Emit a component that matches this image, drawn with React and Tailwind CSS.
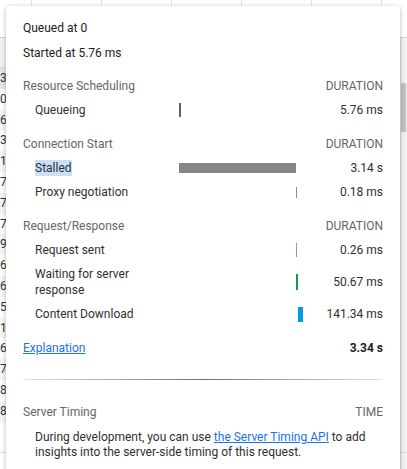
import React from "react";

const total = 3340;
const scale = 124 / total;

const sections = [
	{
		title: "Resource Scheduling",
		rows: [{ label: "Queueing", start: 0, end: 5.76, color: "#5f5f5f", h: 14, minW: 2, value: "5.76 ms" }],
	},
	{
		title: "Connection Start",
		rows: [
			{ label: "Stalled", start: 5.76, end: 3145, color: "#888888", h: 10, minW: 1, value: "3.14 s", selected: true },
			{ label: "Proxy negotiation", start: 3145, end: 3145.2, color: "#a1887f", h: 11, minW: 1, value: "0.18 ms" },
		],
	},
	{
		title: "Request/Response",
		rows: [
			{ label: "Request sent", start: 3145.2, end: 3145.5, color: "#7fa3a3", h: 14, minW: 1, value: "0.26 ms" },
			{ label: "Waiting for server response", start: 3145.5, end: 3196, color: "#0f9d48", h: 16, minW: 2, value: "50.67 ms", tall: true },
			{ label: "Content Download", start: 3196, end: 3340, color: "#039be5", h: 15, minW: 5, value: "141.34 ms" },
		],
	},
];

const digits = ["3", "0", "6", "3", "1", "7", "7", "7", "9", "6", "6", "5", "1", "6", "7", "8", "8"];

function Backdrop() {
	return (
		<div className="absolute inset-0 bg-white">
			{/* header strip with column lines */}
			<div className="flex h-[38px] border-b border-[#d6d6d6]">
				{[32, 70, 70, 70, 70, 70].map((w, i) => (
					<div key={i} className="h-full border-r border-[#e2e2e2]" style={{ width: w }} />
				))}
			</div>
			<div className="h-[30px] bg-[#f1f1f1] border-b border-[#dcdcdc]" />
			<div className="flex flex-col">
				{digits.map((d, i) => (
					<div
						key={i}
						className={`h-[20.8px] leading-[20.8px] text-[12px] text-[#333] ${i === 0 ? "bg-[#e6e6e6]" : i % 2 ? "bg-white" : "bg-[#f5f5f5]"}`}
					>
						{d}
					</div>
				))}
			</div>
			<div className="absolute right-0 top-[38px] bottom-0 w-[7px] bg-[#f1f1f1] border-l border-[#dedede]">
				<div className="mt-[45px] h-[49px] w-[5px] bg-[#c1c1c1]" />
			</div>
			<div className="absolute left-0 right-0 bottom-[16px] border-t border-[#dcdcdc]" />
		</div>
	);
}

function Row({ row }) {
	const left = row.start * scale;
	const width = Math.max(row.minW, (row.end - row.start) * scale);
	return (
		<div className={`flex items-center pl-[12px] ${row.tall ? "h-[40px]" : "h-[24px]"}`}>
			<div className="w-[144px] shrink-0 leading-[16px] text-[#303030]">
				<span className={row.tall ? "block w-[110px]" : row.selected ? "bg-[#c7e0f6] py-[1px]" : ""}>{row.label}</span>
			</div>
			<div className="w-[124px] shrink-0 flex items-center">
				<div style={{ marginLeft: left, width, height: row.h, backgroundColor: row.color }} />
			</div>
			<div className="flex-1 text-right text-[#303030]">{row.value}</div>
		</div>
	);
}

export default function App() {
	return (
		<div
			className="relative w-[407px] h-[469px] overflow-hidden text-[12px]"
			style={{ fontFamily: "Roboto, 'Noto Sans', sans-serif" }}
		>
			<Backdrop />
			<div className="absolute left-[6px] top-[6px] w-[394px] h-[480px] bg-white rounded-[4px] shadow-[0_1px_5px_rgba(0,0,0,0.28)] px-[17px] pt-[9px]">
				<div className="h-[25px] flex items-center text-[#202020]">Queued at 0</div>
				<div className="h-[25px] flex items-center text-[#202020]">Started at 5.76 ms</div>

				{sections.map((s, i) => (
					<div key={s.title} style={{ marginTop: i === 0 ? 9 : 10 }}>
						<div className="h-[24px] flex items-center justify-between text-[#666]">
							<span>{s.title}</span>
							<span>DURATION</span>
						</div>
						{s.rows.map((r) => (
							<Row key={r.label} row={r} />
						))}
					</div>
				))}

				<div className="mt-[10px] h-[24px] flex items-center justify-between">
					<a href="#" className="text-[#1a73e8] underline">Explanation</a>
					<span className="font-bold text-[#202020]">3.34 s</span>
				</div>

				<div className="mt-[19px] h-px bg-gradient-to-r from-[#e4e4e4] via-[#707070] to-[#e4e4e4]" />

				<div className="mt-[20px] h-[24px] flex items-center justify-between text-[#666]">
					<span>Server Timing</span>
					<span>TIME</span>
				</div>
				<p className="mt-[6px] pl-[12px] leading-[15px] text-[#303030]">
					During development, you can use{" "}
					<a href="#" className="text-[#1a73e8] underline">the Server Timing API</a> to add insights into the
					server-side timing of this request.
				</p>
			</div>
		</div>
	);
}
